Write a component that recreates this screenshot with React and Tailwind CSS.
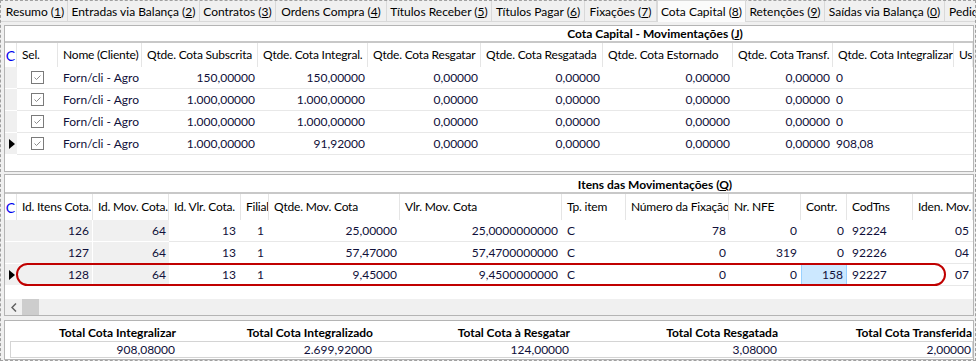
import React from "react";

const tabs = [
  { label: "Resumo", key: "1", w: "w-[65px]" },
  { label: "Entradas via Balança", key: "2", w: "w-[132px]" },
  { label: "Contratos", key: "3", w: "w-[76px]" },
  { label: "Ordens Compra", key: "4", w: "w-[111px]" },
  { label: "Títulos Receber", key: "5", w: "w-[105px]" },
  { label: "Títulos Pagar", key: "6", w: "w-[93px]" },
  { label: "Fixações", key: "7", w: "w-[72px]" },
  { label: "Cota Capital", key: "8", w: "w-[89px]", active: true },
  { label: "Retenções", key: "9", w: "w-[79px]" },
  { label: "Saídas via Balança", key: "0", w: "w-[120px]" },
];

const topCols = [
  { title: "Sel.", w: "w-[41px]" },
  { title: "Nome (Cliente)", w: "w-[84px]" },
  { title: "Qtde. Cota Subscrita", w: "w-[116px]" },
  { title: "Qtde. Cota Integral.", w: "w-[110px]" },
  { title: "Qtde. Cota Resgatar", w: "w-[113px]" },
  { title: "Qtde. Cota Resgatada", w: "w-[122px]" },
  { title: "Qtde. Cota Estornado", w: "w-[130px]" },
  { title: "Qtde. Cota Transf.", w: "w-[100px]" },
  { title: "Qtde. Cota Integralizar", w: "w-[121px]" },
  { title: "Usuário", w: "flex-1" },
];

const topRows = [
  ["150,00000", "150,00000", "0", false],
  ["1.000,00000", "1.000,00000", "0", false],
  ["1.000,00000", "1.000,00000", "0", false],
  ["1.000,00000", "91,92000", "908,08", true],
];

const itemCols = [
  { title: "Id. Itens Cota.", w: "w-[76px]" },
  { title: "Id. Mov. Cota.", w: "w-[76px]" },
  { title: "Id. Vlr. Cota.", w: "w-[72px]" },
  { title: "Filial", w: "w-[28px]" },
  { title: "Qtde. Mov. Cota", w: "w-[131px]" },
  { title: "Vlr. Mov. Cota", w: "w-[162px]" },
  { title: "Tp. item", w: "w-[64px]" },
  { title: "Número da Fixação", w: "w-[103px]" },
  { title: "Nr. NFE", w: "w-[72px]" },
  { title: "Contr.", w: "w-[46px]" },
  { title: "CodTns", w: "w-[66px]" },
  { title: "Iden. Mov.", w: "flex-1" },
];

const itemRows = [
  ["126", "64", "13", "1", "25,00000", "25,0000000000", "C", "78", "0", "0", "92224", "05"],
  ["127", "64", "13", "1", "57,47000", "57,4700000000", "C", "0", "319", "0", "92226", "04"],
  ["128", "64", "13", "1", "9,45000", "9,4500000000", "C", "0", "0", "158", "92227", "07"],
];

const totals = [
  { label: "Total Cota Integralizar", value: "908,08000", w: "w-[166px]" },
  { label: "Total Cota Integralizado", value: "2.699,92000", w: "w-[197px]" },
  { label: "Total Cota à Resgatar", value: "124,00000", w: "w-[197px]" },
  { label: "Total Cota Resgatada", value: "3,08000", w: "w-[208px]" },
  { label: "Total Cota Transferida", value: "2,00000", w: "w-[194px]" },
];

const Indicator = () => (
  <svg width="6" height="10" viewBox="0 0 6 10" className="ml-[4px]">
    <path d="M0 0 L6 5 L0 10 Z" fill="#000" />
  </svg>
);

const CheckBox = () => (
  <svg width="13" height="13" viewBox="0 0 13 13">
    <rect x="0.5" y="0.5" width="12" height="12" fill="#fff" stroke="#7a7a7a" />
    <path d="M3.5 6.5 L5.5 8.5 L9.5 4.5" fill="none" stroke="#8a8a8a" strokeWidth="1" />
  </svg>
);

const HeaderCell = ({ w, children }) => (
  <div className={`${w} h-full shrink-0 border-r border-[#e5e5e5] pl-[5px] overflow-hidden whitespace-nowrap tracking-[-0.2px] flex items-center`}>
    {children}
  </div>
);

const TitleBar = ({ children, h }) => (
  <div className={`${h} bg-white border-b-2 border-[#c8c8c8] flex items-center justify-center pl-[332px] font-bold text-black`}>
    {children}
  </div>
);

export default function App() {
  return (
    <div className="w-[976px] h-[362px] overflow-hidden bg-white font-['Lato',sans-serif] text-[12px] text-black">
      <div className="h-[361px] border border-dashed border-[#a0a0a0] bg-[#f0f0f0] flex flex-col">
        {/* tab strip */}
        <div className="h-[21px] flex items-end pl-[2px] border-b border-[#d9d9d9] bg-[#f0f0f0]">
          {tabs.map((t) =>
            t.active ? (
              <div
                key={t.key}
                className={`${t.w} h-[22px] -mb-px shrink-0 bg-[#fbfbfb] border-x border-t border-[#d9d9d9] flex items-start justify-center pt-[2px] whitespace-nowrap overflow-hidden relative z-10`}
              >
                {t.label} (<u>{t.key}</u>)
              </div>
            ) : (
              <div
                key={t.key}
                className={`${t.w} h-[20px] shrink-0 border-r border-[#d9d9d9] flex items-center justify-center pt-[1px] whitespace-nowrap overflow-hidden`}
              >
                {t.label} (<u>{t.key}</u>)
              </div>
            )
          )}
          <div className="flex-1 h-[20px] pl-[4px] pt-[1px] flex items-center overflow-hidden whitespace-nowrap">Pedidos</div>
        </div>

        <div className="flex-1 flex flex-col pl-[3px] pr-px pt-[3px]">
          {/* Cota Capital - Movimentações */}
          <div className="h-[147px] border border-[#b4b4b4] bg-white flex flex-col">
            <TitleBar h="h-[17px]">
              <span>
                Cota Capital - Movimentações (<u>J</u>)
              </span>
            </TitleBar>
            <div className="h-[24px] flex">
              <div className="w-[12px] h-full shrink-0 border-r border-[#e5e5e5] flex items-center justify-center text-[14px] text-[#0000ee]">
                C
              </div>
              {topCols.map((c) => (
                <HeaderCell key={c.title} w={c.w}>
                  {c.title}
                </HeaderCell>
              ))}
            </div>
            {topRows.map((r, i) => (
              <div key={i} className="h-[22px] flex text-[#10103a]">
                <div className="w-[12px] shrink-0 bg-[#f0f0f0] border-b border-white flex items-center">
                  {r[3] && <Indicator />}
                </div>
                <div className="flex-1 flex border-b border-[#e8e8e8]">
                  <div className="w-[41px] shrink-0 flex items-center justify-center">
                    <CheckBox />
                  </div>
                  <div className="w-[84px] shrink-0 pl-[5px] flex items-center whitespace-nowrap">Forn/cli - Agro</div>
                  <div className="w-[116px] shrink-0 pr-[3px] flex items-center justify-end">{r[0]}</div>
                  <div className="w-[110px] shrink-0 pr-[3px] flex items-center justify-end">{r[1]}</div>
                  <div className="w-[113px] shrink-0 pr-[3px] flex items-center justify-end">0,00000</div>
                  <div className="w-[122px] shrink-0 pr-[3px] flex items-center justify-end">0,00000</div>
                  <div className="w-[130px] shrink-0 pr-[3px] flex items-center justify-end">0,00000</div>
                  <div className="w-[100px] shrink-0 pr-[3px] flex items-center justify-end">0,00000</div>
                  <div className="w-[121px] shrink-0 pl-[3px] flex items-center">{r[2]}</div>
                  <div className="flex-1" />
                </div>
              </div>
            ))}
            <div className="flex-1" />
          </div>

          {/* Itens das Movimentações */}
          <div className="mt-[2px] h-[142px] border border-[#b4b4b4] bg-white flex flex-col">
            <TitleBar h="h-[19px] pt-[3px]">
              <span>
                Itens das Movimentações (<u>Q</u>)
              </span>
            </TitleBar>
            <div className="h-[26px] flex">
              <div className="w-[12px] h-full shrink-0 border-r border-[#e5e5e5] flex items-center justify-center text-[14px] text-[#0000ee]">
                C
              </div>
              {itemCols.map((c) => (
                <HeaderCell key={c.title} w={c.w}>
                  {c.title}
                </HeaderCell>
              ))}
            </div>
            <div className="relative">
              {itemRows.map((r, i) => (
                <div key={i} className="h-[22px] flex text-[#10103a]">
                  <div className="w-[12px] shrink-0 bg-[#f0f0f0] border-b border-white flex items-center">
                    {i === 2 && <Indicator />}
                  </div>
                  <div className="w-[76px] shrink-0 bg-[#f0f0f0] border-r border-b border-white pr-[3px] flex items-center justify-end">{r[0]}</div>
                  <div className="w-[76px] shrink-0 bg-[#f0f0f0] border-b border-white pr-[3px] flex items-center justify-end">{r[1]}</div>
                  <div className="flex-1 flex border-b border-[#e8e8e8]">
                    <div className="w-[72px] shrink-0 pr-[5px] flex items-center justify-end">{r[2]}</div>
                    <div className="w-[28px] shrink-0 pr-[5px] flex items-center justify-end">{r[3]}</div>
                    <div className="w-[131px] shrink-0 pr-[3px] flex items-center justify-end">{r[4]}</div>
                    <div className="w-[162px] shrink-0 pr-[4px] flex items-center justify-end">{r[5]}</div>
                    <div className="w-[64px] shrink-0 pl-[5px] flex items-center">{r[6]}</div>
                    <div className="w-[103px] shrink-0 pr-[3px] flex items-center justify-end">{r[7]}</div>
                    <div className="w-[72px] shrink-0 pr-[4px] flex items-center justify-end">{r[8]}</div>
                    <div
                      className={`w-[46px] shrink-0 pr-[3px] flex items-center justify-end ${
                        i === 2 ? "bg-[#cce8ff] border border-[#99d1ff]" : ""
                      }`}
                    >
                      {r[9]}
                    </div>
                    <div className="w-[66px] shrink-0 pl-[5px] flex items-center">{r[10]}</div>
                    <div className="flex-1 pr-[4px] flex items-center justify-end">{r[11]}</div>
                  </div>
                </div>
              ))}
              {/* highlight annotation */}
              <div className="absolute left-[11px] top-[43px] w-[930px] h-[23px] border-2 border-[#c00000] rounded-[12px] pointer-events-none" />
            </div>
            <div className="flex-1" />
            <div className="h-[16px] bg-[#f0f0f0] flex items-center">
              <div className="w-[17px] h-full flex items-center justify-center">
                <svg width="6" height="9" viewBox="0 0 6 9">
                  <path d="M5 0.5 L1 4.5 L5 8.5" fill="none" stroke="#606060" strokeWidth="1.5" />
                </svg>
              </div>
              <div className="w-[17px] h-full bg-[#cdcdcd]" />
            </div>
          </div>

          {/* totals */}
          <div className="mt-[4px] flex-1 border border-[#b4b4b4] bg-white pl-[5px] pt-[4px]">
            <div className="flex h-[16px] font-bold text-black">
              {totals.map((t) => (
                <div key={t.label} className={`${t.w} shrink-0 flex items-center justify-end whitespace-nowrap`}>
                  {t.label}
                </div>
              ))}
            </div>
            <div className="flex h-[17px] border border-[#d4d4d4] text-[#10103a]">
              {totals.map((t) => (
                <div key={t.label} className={`${t.w} shrink-0 pr-[2px] flex items-center justify-end`}>
                  {t.value}
                </div>
              ))}
            </div>
          </div>
        </div>
      </div>
    </div>
  );
}
